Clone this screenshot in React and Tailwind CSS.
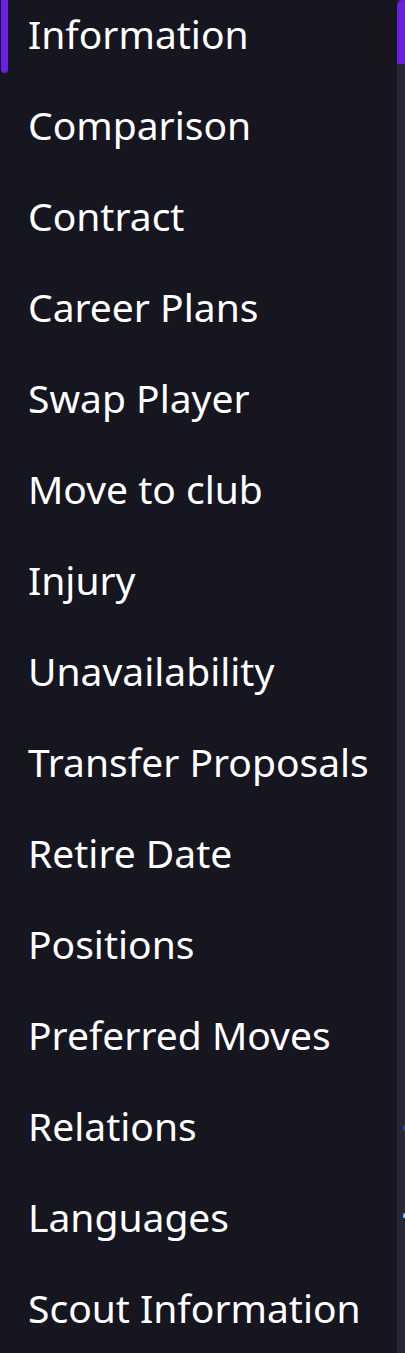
import React from "react";

const items = [
  "Information",
  "Comparison",
  "Contract",
  "Career Plans",
  "Swap Player",
  "Move to club",
  "Injury",
  "Unavailability",
  "Transfer Proposals",
  "Retire Date",
  "Positions",
  "Preferred Moves",
  "Relations",
  "Languages",
  "Scout Information",
];

export default function App() {
  return (
    <div
      className="flex h-[1353px] w-[405px] overflow-hidden bg-[#161620]"
      style={{ fontFamily: '"Noto Sans", sans-serif' }}
    >
      <nav className="relative flex-1">
        <div className="absolute left-[1px] top-0 h-[73px] w-[7px] rounded-b-full bg-[#6b1fe0]" />
        <ul className="-mt-[12px] flex flex-col">
          {items.map((t) => (
            <li
              key={t}
              className="flex h-[91px] items-center pl-[28px] text-[39px] leading-none text-white"
            >
              {t}
            </li>
          ))}
        </ul>
      </nav>
      <div className="relative flex w-[8px] flex-col bg-[#272738]">
        <div className="h-[64px] rounded-tl-[6px] bg-[#6b1fe0]" />
        <div className="absolute right-0 top-[1125px] h-[6px] w-[2px] rounded-l-full bg-[#3b3bd0]" />
        <div className="absolute right-0 top-[1213px] h-[5px] w-[2px] rounded-tl-full bg-[#8ab4f0]" />
      </div>
    </div>
  );
}
